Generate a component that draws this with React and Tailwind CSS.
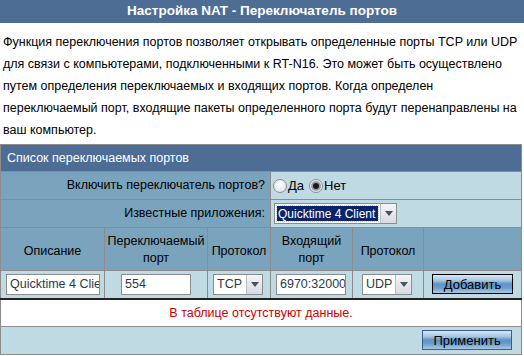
import React from "react";

const font = { fontFamily: '"Liberation Sans", Arial, sans-serif' };

function Arrow() {
  return (
    <div className="flex h-full w-[16px] shrink-0 items-center justify-center border-l border-[#b8bcc4] bg-[linear-gradient(to_bottom,#f4f5f8,#d6dae2)]">
      <svg width="8" height="5" viewBox="0 0 8 5">
        <path d="M0 0 L8 0 L4 5 Z" fill="#4a5260" />
      </svg>
    </div>
  );
}

function MiniSelect({ value }) {
  return (
    <div className="flex h-[21px] w-[50px] items-stretch border border-[#8c8c8c] bg-white">
      <div className="flex flex-1 items-center pl-[3px] text-[12.5px] text-[#2d3a44] whitespace-nowrap overflow-hidden">{value}</div>
      <Arrow />
    </div>
  );
}

function Radio({ checked }) {
  return (
    <div className="flex h-[14px] w-[14px] shrink-0 items-center justify-center rounded-full border border-[#8a8f99] bg-[radial-gradient(circle_at_40%_35%,#ffffff,#d8dce4)]">
      {checked && <div className="h-[6px] w-[6px] rounded-full bg-[#1a1a1a] shadow-[0_0_0_2px_#9aa0ab]" />}
    </div>
  );
}

const btn =
  "h-[20px] text-[13px] text-black bg-[linear-gradient(to_bottom,#d9e8f4_0%,#a6c6e3_30%,#5e93c6_50%,#6a9ccc_70%,#a8c8e4_100%)]";

export default function App() {
  return (
    <div className="w-[524px] h-[356px] bg-white overflow-hidden" style={font}>
      <div className="h-[23px] bg-[#4e6d94] text-white font-bold text-[13.5px] flex items-center justify-center">
        Настройка NAT - Переключатель портов
      </div>
      <p className="pt-[8px] pl-[3px] pr-[4px] text-[12.5px] leading-[22px] text-black mb-[3px]">
        Функция переключения портов позволяет открывать определенные порты TCP или UDP для связи с компьютерами, подключенными к RT-N16. Это может быть осуществлено путем определения переключаемых и входящих портов. Когда определен переключаемый порт, входящие пакеты определенного порта будут перенаправлены на ваш компьютер.
      </p>
      <table className="w-[521px] border-collapse table-fixed text-[12.5px] border border-[#8c8c8c]">
        <colgroup>
          <col className="w-[104px]" />
          <col className="w-[103px]" />
          <col className="w-[63px]" />
          <col className="w-[82px]" />
          <col className="w-[71px]" />
          <col className="w-[98px]" />
        </colgroup>
        <tbody>
          <tr className="h-[27px] bg-[#4e6d94]">
            <td colSpan={6} className="pl-[6px] text-white border border-[#8c8c8c]">
              Список переключаемых портов
            </td>
          </tr>
          <tr className="h-[28px]">
            <td colSpan={3} className="bg-[#7aa3bd] text-right pr-[5px] text-black border border-[#8c8c8c]">
              Включить переключатель портов?
            </td>
            <td colSpan={3} className="bg-[#c0dae4] border border-[#8c8c8c] pl-[2px]">
              <div className="flex items-center text-[13px]">
                <Radio />
                <span className="ml-[1px] mr-[5px]">Да</span>
                <Radio checked />
                <span className="ml-[1px]">Нет</span>
              </div>
            </td>
          </tr>
          <tr className="h-[28px]">
            <td colSpan={3} className="bg-[#7aa3bd] text-right pr-[5px] text-black border border-[#8c8c8c]">
              Известные приложения:
            </td>
            <td colSpan={3} className="bg-[#c0dae4] border border-[#8c8c8c] pl-[3px]">
              <div className="flex h-[21px] w-[123px] items-stretch border border-[#8c8c8c] bg-white">
                <div className="flex flex-1 items-center p-[2px] min-w-0">
                  <div className="flex h-full w-full items-center bg-[#0a246a] text-white text-[12px] pl-[1px] whitespace-nowrap overflow-hidden outline outline-1 outline-dotted outline-[#e0d890]">
                    Quicktime 4 Client
                  </div>
                </div>
                <Arrow />
              </div>
            </td>
          </tr>
          <tr className="h-[43px] bg-[#7aa3bd] text-center text-black leading-[17px]">
            <td className="border border-[#8c8c8c] pt-[4px]">Описание</td>
            <td className="border border-[#8c8c8c] pt-[2px]">Переключаемый<br />порт</td>
            <td className="border border-[#8c8c8c] pt-[4px]">Протокол</td>
            <td className="border border-[#8c8c8c] pt-[2px]">Входящий<br />порт</td>
            <td className="border border-[#8c8c8c] pt-[4px]">Протокол</td>
            <td className="border border-[#8c8c8c]"></td>
          </tr>
          <tr className="h-[28px] bg-[#c0dae4]">
            <td className="border border-[#8c8c8c] pl-[5px]">
              <div className="h-[21px] w-[94px] border border-[#8c8c8c] bg-white text-[12.5px] text-[#2d3a44] pl-[3px] flex items-center overflow-hidden whitespace-nowrap">
                Quicktime 4 Client
              </div>
            </td>
            <td className="border border-[#8c8c8c] pl-[16px]">
              <div className="h-[21px] w-[70px] border border-[#8c8c8c] bg-white text-[12.5px] text-[#2d3a44] pl-[3px] flex items-center">
                554
              </div>
            </td>
            <td className="border border-[#8c8c8c] pl-[5px]">
              <MiniSelect value="TCP" />
            </td>
            <td className="border border-[#8c8c8c] pl-[5px]">
              <div className="h-[21px] w-[70px] border border-[#8c8c8c] bg-white text-[12.5px] text-[#2d3a44] pl-[3px] flex items-center overflow-hidden whitespace-nowrap">
                6970:32000
              </div>
            </td>
            <td className="border border-[#8c8c8c] pl-[9px]">
              <MiniSelect value="UDP" />
            </td>
            <td className="border border-[#8c8c8c] pl-[8px]">
              <button className={btn + " w-[81px] border border-black"}>Добавить</button>
            </td>
          </tr>
          <tr className="h-[28px] bg-white border-t-2 border-t-[#222]">
            <td colSpan={6} className="text-center text-[#cc0000] border-x border-[#8c8c8c] pt-[2px]">
              В таблице отсутствуют данные.
            </td>
          </tr>
          <tr className="h-[28px] bg-[#c0dae4]">
            <td colSpan={6} className="text-right pr-[9px] border border-[#8c8c8c]">
              <button className={btn + " w-[90px] border border-[#3d5f8f]"}>Применить</button>
            </td>
          </tr>
        </tbody>
      </table>
    </div>
  );
}
